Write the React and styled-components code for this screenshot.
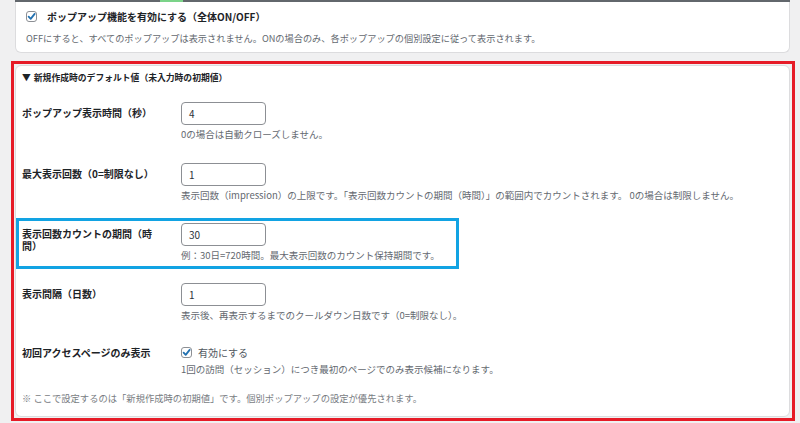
import React from "react";
import styled, { createGlobalStyle } from "styled-components";

const GlobalStyle = createGlobalStyle`
  html, body {
    margin: 0;
    padding: 0;
    background: #f0f0f1;
    font-family: "Noto Sans CJK JP", "Noto Sans", sans-serif;
    color: #1d2327;
  }
  * { box-sizing: border-box; }
`;

const Page = styled.div`
  width: 800px;
  height: 423px;
  padding: 0 10px 0 15px;
  overflow: hidden;
`;

const Card = styled.div`
  position: relative;
  background: #fff;
  border: 1px solid #dcdcde;
  border-radius: 6px;
`;

const TopCard = styled(Card)`
  height: 53px;
  border-top: none;
  border-radius: 0 0 6px 6px;
  padding: 9px 10px 0 10px;
`;

// thin dark strip at the very top of the screenshot
const TopStrip = styled.div`
  position: absolute;
  left: -1px;
  right: -1px;
  top: 0;
  height: 2px;
  background: #62676c;
`;

const StripMark = styled.div`
  position: absolute;
  left: 145px;
  top: 0;
  width: 23px;
  height: 2px;
  background: #7bd389;
`;

const CheckLine = styled.label`
  display: flex;
  align-items: center;
  gap: ${(p) => p.$gap || 10}px;
  height: 14px;
  font-size: ${(p) => p.$size || 10}px;
  font-weight: ${(p) => (p.$bold ? 700 : 400)};
  color: ${(p) => (p.$bold ? "#1d2327" : "#50575e")};
  white-space: nowrap;
`;

const Box = styled.span`
  display: inline-flex;
  align-items: center;
  justify-content: center;
  flex: none;
  width: ${(p) => p.$s}px;
  height: ${(p) => p.$s}px;
  border: 1px solid #8c8f94;
  border-radius: 3px;
  background: #fff;
  svg { display: block; }
`;

const Desc = styled.p`
  margin: ${(p) => p.$mt || 0}px 0 0;
  font-size: ${(p) => p.$size || 9.5}px;
  line-height: 12px;
  color: #646970;
  white-space: nowrap;
`;

const Section = styled(Card)`
  margin-top: 12px;
  height: 352px;
  padding: 6px 8px 0 6px;

  /* red annotation frame drawn over the card */
  &::after {
    content: "";
    position: absolute;
    inset: -5px -6px -5px -5px;
    border: 3px solid #e61b27;
    pointer-events: none;
  }
`;

const Summary = styled.div`
  font-size: 8.8px;
  font-weight: 700;
  line-height: 12px;
  color: #1d2327;
  white-space: nowrap;

  span { margin-right: 3px; }
`;

const Row = styled.div`
  display: grid;
  grid-template-columns: 159px auto;
  margin-top: ${(p) => p.$mt}px;
`;

const Highlight = styled.div`
  width: fit-content;
  margin-left: -6px;
  margin-top: ${(p) => p.$mt}px;
  padding: 2px 16px 5px 3px;
  border: 3px solid #12a3e3;
`;

const Label = styled.div`
  width: 136px;
  padding-top: ${(p) => p.$pt}px;
  font-size: 10px;
  font-weight: 700;
  line-height: 12px;
  color: #1d2327;
`;

const Field = styled.div`
  display: flex;
  flex-direction: column;
`;

const Input = styled.div`
  width: 85px;
  height: 23px;
  border: 1px solid #8c8f94;
  border-radius: 4px;
  padding: 0 7px;
  font-size: 10px;
  line-height: 21px;
  color: #2c3338;
  background: #fff;
`;

const Note = styled.p`
  margin: 17px 0 0;
  font-size: 9.3px;
  line-height: 12px;
  color: #787c82;
  white-space: nowrap;
`;

const Check = ({ size }) => (
  <Box $s={size}>
    <svg width={size - 2} height={size - 2} viewBox="0 0 10 10">
      <path d="M1.8 5.2 L4.1 7.6 L8.5 2.1" fill="none" stroke="#2271b1" strokeWidth="2" strokeLinecap="round" strokeLinejoin="round" />
    </svg>
  </Box>
);

const NumberRow = ({ label, value, desc, mt }) => (
  <Row $mt={mt}>
    <Label $pt={5}>{label}</Label>
    <Field>
      <Input>{value}</Input>
      <Desc $mt={3}>{desc}</Desc>
    </Field>
  </Row>
);

export default function App() {
  return (
    <Page>
      <GlobalStyle />
      <TopCard>
        <TopStrip>
          <StripMark />
        </TopStrip>
        <CheckLine $bold $size={10}>
          <Check size={11} />
          ポップアップ機能を有効にする（全体ON/OFF）
        </CheckLine>
        <Desc $mt={9} $size={9.2}>
          OFFにすると、すべてのポップアップは表示されません。ONの場合のみ、各ポップアップの個別設定に従って表示されます。
        </Desc>
      </TopCard>

      <Section>
        <Summary>
          <span>▼</span>新規作成時のデフォルト値（未入力時の初期値）
        </Summary>

        <NumberRow
          mt={18}
          label="ポップアップ表示時間（秒）"
          value="4"
          desc="0の場合は自動クローズしません。"
        />
        <NumberRow
          mt={23}
          label="最大表示回数（0=制限なし）"
          value="1"
          desc="表示回数（impression）の上限です。「表示回数カウントの期間（時間）」の範囲内でカウントされます。 0の場合は制限しません。"
        />
        <Highlight $mt={17}>
          <Row $mt={0}>
            <Label $pt={5}>表示回数カウントの期間（時間）</Label>
            <Field>
              <Input>30</Input>
              <Desc $mt={3}>例：30日=720時間。最大表示回数のカウント保持期間です。</Desc>
            </Field>
          </Row>
        </Highlight>
        <NumberRow
          mt={14}
          label="表示間隔（日数）"
          value="1"
          desc="表示後、再表示するまでのクールダウン日数です（0=制限なし）。"
        />
        <Row $mt={24}>
          <Label $pt={2}>初回アクセスページのみ表示</Label>
          <Field>
            <CheckLine $gap={6}>
              <Check size={11} />
              有効にする
            </CheckLine>
            <Desc $mt={4}>1回の訪問（セッション）につき最初のページでのみ表示候補になります。</Desc>
          </Field>
        </Row>
        <Note>※ ここで設定するのは「新規作成時の初期値」です。個別ポップアップの設定が優先されます。</Note>
      </Section>
    </Page>
  );
}
